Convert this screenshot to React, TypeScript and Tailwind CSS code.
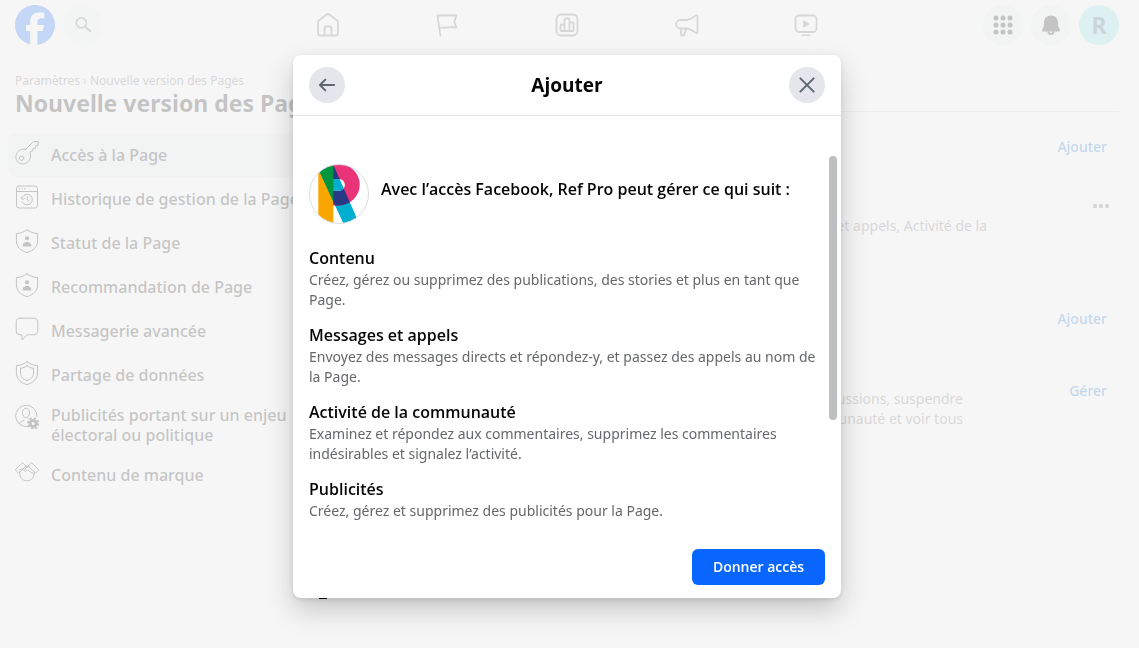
import type { ReactNode, SVGProps } from "react";
import { FaFacebook } from "react-icons/fa6";

function Icon({ children, ...props }: SVGProps<SVGSVGElement>) {
  return (
    <svg
      viewBox="0 0 24 24"
      fill="none"
      stroke="currentColor"
      strokeLinecap="round"
      strokeLinejoin="round"
      aria-hidden="true"
      className="h-6 w-6 shrink-0"
      {...props}
    >
      {children}
    </svg>
  );
}

const shieldPath = "M12 .8C9.200 3 5.200 4.400 1.400 4.600V12c0 5.600 4.200 9.800 10.600 11.600C18.400 21.800 22.600 17.600 22.600 12V4.600C18.800 4.400 14.800 3 12 .8z";

const navItems: { label: string; icon: ReactNode }[] = [
  {
    label: "Accueil",
    icon: (
      <>
        <path d="M2 9.600c0-1 .4-1.800 1.200-2.400l7.300-5.600c.9-.7 2.100-.7 3 0l7.300 5.600c.8.600 1.200 1.400 1.200 2.400V20a2.500 2.500 0 0 1-2.500 2.500h-15A2.500 2.500 0 0 1 2 20z" />
        <path d="M8.500 22.300V15a1.500 1.500 0 0 1 1.500-1.500h4a1.500 1.500 0 0 1 1.500 1.500v7.300" />
      </>
    ),
  },
  {
    label: "Pages",
    icon: <path d="M5.300 22.500 2.500 2.500h19l-2.200 6.200 2.200 5.800c-5-1.200-11 .8-17.200 0" />,
  },
  {
    label: "Statistiques",
    icon: (
      <>
        <rect x="1.500" y="1.500" width="21" height="21" rx="4.500" />
        <path d="M5.500 12.500a1 1 0 0 1 1-1h3v6.500h-3a1 1 0 0 1-1-1zM9.500 18V7a1.500 1.500 0 0 1 1.500-1.500h2A1.500 1.500 0 0 1 14.500 7v11zM14.500 9.500h3a1 1 0 0 1 1 1V17a1 1 0 0 1-1 1h-3z" />
      </>
    ),
  },
  {
    label: "Publicités",
    icon: (
      <>
        <path d="M5.500 7h6c3 0 6.500-2.500 9.500-4.600.6-.4 1.500-.1 1.500.8v16c0 .9-.9 1.200-1.500.8-3-2.200-6.500-4.500-9.500-4.500h-6a4.250 4.250 0 0 1 0-8.500z" />
        <path d="M6 15.500v5.200c0 1 .7 1.800 1.800 1.800S9.500 21.700 9.500 20.700v-1.200c1.500 0 1.500-4 .5-4" />
      </>
    ),
  },
  {
    label: "Vidéos",
    icon: (
      <>
        <rect x="1.500" y="2.500" width="21" height="16.500" rx="3.500" />
        <path d="m9.800 8 5.400 3-5.400 3z" fill="currentColor" strokeWidth="1" />
        <path d="M8 22.200h8" strokeWidth="1.500" />
      </>
    ),
  },
];

const settings: { label: string; icon: ReactNode }[] = [
  {
    label: "Accès à la Page",
    icon: (
      <>
        <path d="M10.800 8.200 17.500 1.500l1.300-.9h4.400v3.600l-2.500.6-.2 2.300-2.400.5-.2 2.300-2.300.6-.4 1.600c1 3.200.2 6.200-1.900 8.400-3.100 3.100-7.800 3.100-10.500.4-2.600-2.800-2.600-7.400.4-10.500 2-2 4.800-2.700 7.600-2.200z" />
        <circle cx="6.600" cy="17.200" r="2.200" />
      </>
    ),
  },
  {
    label: "Historique de gestion de la Page",
    icon: (
      <>
        <rect x="1.500" y="1" width="21" height="22" rx="2.500" />
        <path d="M1.500 6.500h21M4 3.800h.6M6.700 3.800h.6M9.400 3.800h.6" />
        <path d="M7.500 11.800a5.300 5.300 0 1 1-.3 5M6.300 12.200l1 2.200 2.200-1M12.200 11.600v3.200l1.800 1.300" />
      </>
    ),
  },
  {
    label: "Statut de la Page",
    icon: (
      <>
        <path d={shieldPath} />
        <circle cx="12" cy="9.300" r="2.100" fill="currentColor" stroke="none" />
        <path d="M7.800 17.500c-.5-3 1.700-4.600 4.200-4.600s4.700 1.600 4.200 4.600z" fill="currentColor" stroke="none" />
      </>
    ),
  },
  {
    label: "Recommandation de Page",
    icon: (
      <>
        <path d={shieldPath} />
        <circle cx="12" cy="9.300" r="2.100" fill="currentColor" stroke="none" />
        <path d="M7.800 17.500c-.5-3 1.700-4.600 4.200-4.600s4.700 1.600 4.200 4.600z" fill="currentColor" stroke="none" />
      </>
    ),
  },
  {
    label: "Messagerie avancée",
    icon: (
      <path d="M5 1.200h14a3.800 3.800 0 0 1 3.800 3.800v9a3.800 3.800 0 0 1-3.800 3.800h-6.700L7 23v-5.200H5A3.800 3.800 0 0 1 1.200 14V5A3.800 3.800 0 0 1 5 1.200z" />
    ),
  },
  {
    label: "Partage de données",
    icon: (
      <>
        <path d={shieldPath} />
        <path d="M12 4.800c-1.800 1.400-4.200 2.200-6.500 2.400V12c0 3.500 2.500 6.200 6.500 7.600 4-1.400 6.500-4.100 6.500-7.600V7.200C16.200 7 13.800 6.200 12 4.800z" />
      </>
    ),
  },
  {
    label: "Publicités portant sur un enjeu électoral ou politique",
    icon: (
      <>
        <path d="M12.500 21.600A10.700 10.700 0 1 1 22 11.500M4.200 18.600c1-2 3-2.700 5-3.300" />
        <ellipse cx="11" cy="7.800" rx="3.700" ry="4.600" />
        <path d="M14 14.200c-.8-.3-1.300-.7-1.300-1.600" />
        <circle cx="18.200" cy="18.500" r="3.100" strokeWidth="3" />
        <circle cx="18.200" cy="18.500" r="5.200" strokeWidth="2" strokeDasharray="2 2.080" strokeLinecap="butt" />
      </>
    ),
  },
  {
    label: "Contenu de marque",
    icon: (
      <>
        <path d="M.5 8.500 7.500 1.800l3.400 3.100L3.800 12zM23.500 8.500l-7-6.700-3.400 3.100 7.100 7.100z" />
        <path d="M4.800 11.200c-.5 5 2.300 8.300 7.200 8.600 4.900-.3 7.700-3.600 7.200-8.600M9.700 6c1.500-.8 3-.6 4.500 0M13.500 5.400 8.600 9c.6 1.600 2.600 1.500 4-.2 1.300 1.800 3.600 2.400 5.300 3.600M4.500 9l4-1.200" />
      </>
    ),
  },
];

const permissions = [
  {
    title: "Contenu",
    text: "Créez, gérez ou supprimez des publications, des stories et plus en tant que Page.",
  },
  {
    title: "Messages et appels",
    text: "Envoyez des messages directs et répondez-y, et passez des appels au nom de la Page.",
  },
  {
    title: "Activité de la communauté",
    text: "Examinez et répondez aux commentaires, supprimez les commentaires indésirables et signalez l’activité.",
  },
  {
    title: "Publicités",
    text: "Créez, gérez et supprimez des publicités pour la Page.",
  },
];

function PageAvatar() {
  return (
    <svg viewBox="0 0 60 60" className="h-15 w-15 shrink-0" role="img" aria-label="Ref Pro">
      <defs>
        <clipPath id="disc">
          <circle cx="30" cy="30" r="29.500" />
        </clipPath>
        <clipPath id="leg">
          <path d="M7 0h17l26.400 60H34.600z" />
        </clipPath>
      </defs>
      <circle cx="30" cy="30" r="29.500" fill="#fff" />
      <g clipPath="url(#disc)">
        <path d="M9.300 0h15v60h-15z" fill="#f9a602" />
        <path d="M7 0h17l26.400 60H34.600z" fill="#00afd0" />
        <path d="M24 0h6a20.700 20.700 0 0 1 0 41.400h-6z" fill="#ea3479" />
        <path d="M24 0h6a20.700 20.700 0 0 1 0 41.400h-6z" fill="#283a85" clipPath="url(#leg)" />
        <path d="M24 15h6a5.900 5.900 0 0 1 0 11.800h-6z" fill="#fff" />
        <path d="M24 15h6a5.900 5.900 0 0 1 0 11.800h-6z" fill="#00afd0" clipPath="url(#leg)" />
        <path d="M9.300 0h15v60h-15z" fill="#00963f" clipPath="url(#leg)" />
      </g>
      <circle cx="30" cy="30" r="29.500" fill="none" stroke="#dadde1" />
    </svg>
  );
}

function Header() {
  return (
    <header className="grid h-[50px] grid-cols-[1fr_598px_1fr] items-center pl-[15px] pr-4">
      <div className="flex items-center gap-2">
        <a href="#accueil" aria-label="Facebook">
          <FaFacebook className="h-10 w-10 text-[#0866ff]" />
        </a>
        <button type="button" aria-label="Rechercher" className="flex h-10 w-10 items-center justify-center rounded-full bg-[#f0f2f5] text-[#65676b]">
          <Icon strokeWidth="2" className="h-5 w-5">
            <circle cx="10" cy="9.500" r="6" />
            <path d="m15 14.500 5.500 5" strokeWidth="2.600" />
          </Icon>
        </button>
      </div>
      <nav className="flex">
        {navItems.map((item) => (
          <a key={item.label} href="#nav" aria-label={item.label} className="flex flex-1 justify-center text-[#65676b]">
            <Icon strokeWidth="1.800">{item.icon}</Icon>
          </a>
        ))}
      </nav>
      <div className="flex justify-end gap-2">
        <button type="button" aria-label="Menu" className="flex h-10 w-10 items-center justify-center rounded-full bg-[#eceef1]">
          <svg viewBox="0 0 20 20" className="h-5 w-5" fill="#050505" aria-hidden="true">
            {[3, 10, 17].map((y) => [3, 10, 17].map((x) => <circle key={`${x}-${y}`} cx={x} cy={y} r="2.500" />))}
          </svg>
        </button>
        <button type="button" aria-label="Notifications" className="flex h-10 w-10 items-center justify-center rounded-full bg-[#eceef1]">
          <svg viewBox="0 0 20 20" className="h-5 w-5" fill="#050505" aria-hidden="true">
            <path d="M10 .5c4.200 0 7 3 7 7.200 0 3 .3 4.600 1.600 6.500.8 1.200.2 2.300-1.100 2.300h-15c-1.300 0-1.900-1.100-1.100-2.300C2.700 12.300 3 10.700 3 7.700 3 3.500 5.800.5 10 .5z" />
            <path d="M6.500 16.500h7a3.500 3.500 0 0 1-7 0zm2 0a1.500 1.500 0 0 0 3 0z" />
          </svg>
        </button>
        <button type="button" className="h-10 w-10 rounded-full bg-[#80deea] text-[23px] font-bold text-[#31606b]">
          R
        </button>
      </div>
    </header>
  );
}

function Sidebar() {
  return (
    <aside className="w-[360px] shrink-0 px-2 pt-[23px]">
      <div className="px-[7px] pb-[15px]">
        <p className="text-xs leading-4 text-[#65676b]">Paramètres › Nouvelle version des Pages</p>
        <h1 className="text-[23px] leading-[29px] font-bold whitespace-nowrap">Nouvelle version des Pages</h1>
      </div>
      <nav>
        {settings.map((item, i) => (
          <a
            key={item.label}
            href="#parametre"
            className={`flex min-h-11 gap-3 rounded-lg px-[7px] py-2 ${i === 0 ? "bg-[#eceef1]" : ""}`}
          >
            <Icon strokeWidth="1">{item.icon}</Icon>
            <span className="self-center text-base leading-5 font-medium">{item.label}</span>
          </a>
        ))}
      </nav>
    </aside>
  );
}

function PageAccess() {
  return (
    <main className="min-w-0 flex-1 pt-[61px] pr-4">
      <hr className="border-[#ced0d4]" />
      <div className="pr-3 text-right text-sm leading-5 text-[#65676b]">
        <button type="button" className="mt-[25px] block ml-auto text-[#0064d1] font-medium">Ajouter</button>
        <button type="button" aria-label="Plus d’options" className="mt-[39px] block ml-auto">
          <svg viewBox="0 0 20 20" className="-mr-1 h-5 w-5" fill="currentColor" aria-hidden="true">
            <circle cx="4" cy="10" r="2.200" />
            <circle cx="10" cy="10" r="2.200" />
            <circle cx="16" cy="10" r="2.200" />
          </svg>
        </button>
        <p className="pr-30">et appels, Activité de la</p>
        <button type="button" className="mt-[73px] block ml-auto text-[#0064d1] font-medium">Ajouter</button>
        <button type="button" className="mt-[52px] block ml-auto text-[#0064d1] font-medium">Gérer</button>
        <p className="-mt-3 pr-36">
          discussions, suspendre
          <br />
          communauté et voir tous
        </p>
      </div>
    </main>
  );
}

function GrantAccessDialog() {
  return (
    <div role="dialog" aria-modal="true" aria-labelledby="dialog-title" className="relative w-[548px] rounded-lg bg-white shadow-[0_12px_28px_rgba(0,0,0,0.2),0_2px_4px_rgba(0,0,0,0.1)]">
      <div className="flex h-[61px] items-center justify-between border-b border-[#e5e5e5] px-4">
        <button type="button" aria-label="Retour" className="flex h-9 w-9 items-center justify-center rounded-full bg-[#e4e6eb] text-[#606770]">
          <Icon strokeWidth="2.400" className="h-5 w-5">
            <path d="M20.500 12H4M10 5.500 3.500 12l6.500 6.500" />
          </Icon>
        </button>
        <h2 id="dialog-title" className="font-['Open_Sans',sans-serif] text-[19px] leading-6 font-bold">Ajouter</h2>
        <button type="button" aria-label="Fermer" className="flex h-9 w-9 items-center justify-center rounded-full bg-[#e4e6eb] text-[#606770]">
          <Icon strokeWidth="2.400" className="h-5 w-5">
            <path d="m4 4 16 16M20 4 4 20" />
          </Icon>
        </button>
      </div>

      <div className="px-4 pt-12 pb-7">
        <div className="flex gap-3">
          <PageAvatar />
          <p className="pt-[15px] font-['Open_Sans',sans-serif] text-base leading-5 font-semibold">
            Avec l’accès Facebook, Ref Pro peut gérer ce qui suit :
          </p>
        </div>
        <div className="mt-6 flex flex-col gap-[15px]">
          {permissions.map((item) => (
            <section key={item.title}>
              <h3 className="font-['Open_Sans',sans-serif] text-base leading-5 font-semibold">{item.title}</h3>
              <p className="mt-0.5 text-sm leading-5 text-[#65676b]">{item.text}</p>
            </section>
          ))}
        </div>
      </div>

      <div className="flex justify-end px-4 pb-[13px]">
        <button type="button" className="h-9 w-[133px] rounded-md bg-[#0866ff] font-['Open_Sans',sans-serif] text-sm font-semibold text-white">
          Donner accès
        </button>
      </div>

      {/* scroll thumb */}
      <div className="absolute top-[101px] right-1 h-[264px] w-2 rounded-full bg-[#bcc0c1]" />
      <div className="absolute top-full left-[26px] h-px w-2 bg-black" />
    </div>
  );
}

export default function App() {
  return (
    <div className="min-h-screen overflow-hidden bg-white pr-1 font-['Noto_Sans',sans-serif] text-[#050505]">
      <Header />
      <div className="flex">
        <Sidebar />
        <PageAccess />
      </div>
      <div className="fixed inset-0 flex items-start justify-center bg-[#f4f4f4]/80 pt-[55px] pr-[5px]">
        <GrantAccessDialog />
      </div>
    </div>
  );
}
